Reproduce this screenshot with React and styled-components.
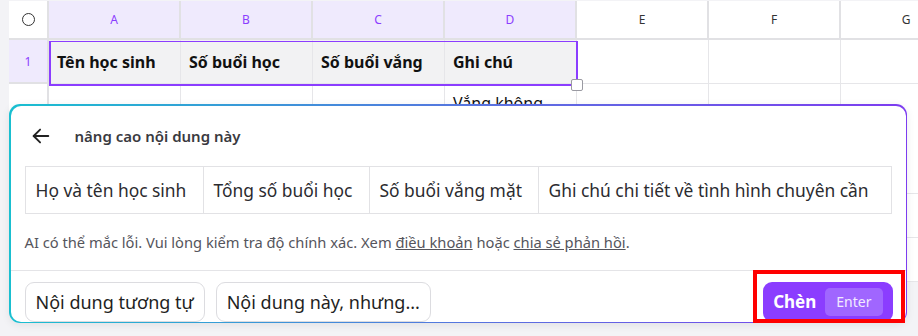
import React from 'react'
import styled, { createGlobalStyle, css } from 'styled-components'

const GlobalStyle = createGlobalStyle`
    html, body { margin: 0; padding: 0; }
    body {
        font-family: "Noto Sans", "Liberation Sans", sans-serif;
        background: #f3f3f6;
        overflow: hidden;
    }
`

const ScPage = styled.div`
    position: relative;
    width: 918px;
    height: 336px;
    overflow: hidden;
    background: #f3f3f6;
    padding: 1px 0 0 9px;
    box-sizing: border-box;
`
const ScSheet = styled.div`
    display: grid;
    grid-template-columns: 40px repeat(7, 132px);
    grid-template-rows: 39px 44px 110px 44px 44px;
    background: #fff;
`
const ScCell = styled.div`
    box-sizing: border-box;
    border-right: 1px solid #e6e6e9;
    border-bottom: 1px solid #e6e6e9;
    display: flex;
    align-items: center;
    padding: 0 8px;
    font-size: 16px;
    color: #111;
    background: #fff;
    white-space: nowrap;
    overflow: hidden;
    ${props => props.head && css`
        justify-content: center;
        font-size: 12px;
        color: #333;
        border-right: 2px solid #e1e1e4;
        border-bottom: 2px solid #e1e1e4;
        background: #fff;
    `}
    ${props => props.headActive && css`
        background: #efeafd;
        color: #8b3dff;
    `}
    ${props => props.selected && css`
        background: #f2f2f3;
        font-weight: 700;
        padding-left: 8px;
    `}
    ${props => props.top && css`
        align-items: flex-start;
        padding-top: 8px;
    `}
`
const ScCorner = styled.span`
    width: 11px;
    height: 11px;
    border: 1.5px solid #333;
    border-radius: 50%;
`
const ScSelection = styled.div`
    position: absolute;
    left: 49px;
    top: 41px;
    width: 529px;
    height: 45px;
    box-sizing: border-box;
    border: 2px solid #8b3dff;
    border-top-width: 1px;
    pointer-events: none;
`
const ScHandle = styled.span`
    position: absolute;
    right: -7px;
    bottom: -7px;
    width: 10px;
    height: 10px;
    background: #fff;
    border: 1px solid #9a9aa2;
    border-radius: 2px;
`

const ScPanelFrame = styled.div`
    position: absolute;
    left: 9px;
    top: 104px;
    width: 898px;
    height: 219px;
    box-sizing: border-box;
    padding: 1.5px;
    border-radius: 11px;
    background: linear-gradient(90deg, #19bfd0 0%, #5b6fe0 55%, #7d3cf0 100%);
    box-shadow: 0 2px 8px rgba(0, 0, 0, 0.08);
`
const ScPanel = styled.div`
    height: 100%;
    background: #fff;
    border-radius: 10px;
    display: flex;
    flex-direction: column;
`
const ScPanelHead = styled.div`
    display: flex;
    align-items: center;
    height: 60px;
    padding: 0 0 0 18px;
    gap: 22px;
`
const ScBack = styled.button`
    border: 0;
    background: none;
    padding: 0;
    width: 24px;
    height: 24px;
    display: flex;
    align-items: center;
    justify-content: center;
    color: #222;
`
const ScTitle = styled.span`
    font-size: 15px;
    font-weight: 600;
    color: #3a3a3f;
`
const ScPreview = styled.div`
    display: flex;
    margin: 0 14px 0 14px;
    border: 1px solid #e2e2e5;
    height: 48px;
    box-sizing: border-box;
`
const ScPreviewCell = styled.div`
    display: flex;
    align-items: center;
    padding: 0 10px;
    font-size: 17.4px;
    color: #2b2b2f;
    border-right: 1px solid #e2e2e5;
    white-space: nowrap;
    width: ${props => props.w}px;
    box-sizing: border-box;
    &:last-child { border-right: 0; flex: 1; }
`
const ScNote = styled.p`
    margin: 0;
    padding: 0 14px;
    height: 56px;
    box-sizing: border-box;
    display: flex;
    align-items: center;
    white-space: pre;
    font-size: 14.7px;
    color: #55555c;
    a { color: #55555c; text-decoration: underline; }
`
const ScDivider = styled.div`
    height: 1px;
    background: #e4e4e7;
`
const ScFooter = styled.div`
    display: flex;
    align-items: center;
    justify-content: space-between;
    padding: 11px 13px 0 14px;
`
const ScChips = styled.div`
    display: flex;
    gap: 11px;
`
const ScChip = styled.button`
    height: 40px;
    padding: 0 10px;
    border: 1px solid #dcdce0;
    border-radius: 9px;
    background: #fff;
    font-family: inherit;
    font-size: 18px;
    color: #1f1f23;
`
const ScInsert = styled.button`
    display: flex;
    align-items: center;
    gap: 9px;
    height: 40px;
    padding: 0 10px 0 10px;
    border: 0;
    border-radius: 9px;
    background: #8b3dff;
    color: #fff;
    font-family: inherit;
    font-size: 17px;
    font-weight: 700;
`
const ScKey = styled.span`
    display: flex;
    align-items: center;
    height: 28px;
    padding: 0 11px;
    border-radius: 5px;
    background: #a066ff;
    font-size: 14px;
    font-weight: 400;
    color: #f2eaff;
`
const ScHighlight = styled.div`
    position: absolute;
    left: 753px;
    top: 270px;
    width: 152px;
    height: 53px;
    box-sizing: border-box;
    border: 4px solid #ff0000;
    pointer-events: none;
`

const columns = ['A', 'B', 'C', 'D', 'E', 'F', 'G']
const headers = ['Tên học sinh', 'Số buổi học', 'Số buổi vắng', 'Ghi chú']
const preview = [
    { text: 'Họ và tên học sinh', w: 178 },
    { text: 'Tổng số buổi học', w: 166 },
    { text: 'Số buổi vắng mặt', w: 169 },
    { text: 'Ghi chú chi tiết về tình hình chuyên cần' },
]

const ArrowLeft = () => (
    <svg width="22" height="22" viewBox="0 0 24 24" fill="none" stroke="currentColor" strokeWidth="2" strokeLinecap="round" strokeLinejoin="round">
        <path d="M20 12H4" />
        <path d="M11 5l-7 7 7 7" />
    </svg>
)

const App = () => {
    return (
        <>
            <GlobalStyle />
            <ScPage>
                <ScSheet>
                    <ScCell head><ScCorner /></ScCell>
                    {columns.map((c, i) => (
                        <ScCell head headActive={i < 4} key={c}>{c}</ScCell>
                    ))}
                    <ScCell head headActive>1</ScCell>
                    {columns.map((c, i) => (
                        <ScCell selected={i < 4} key={'r1' + c}>{headers[i] || ''}</ScCell>
                    ))}
                    {[2, 3, 4].map(r => (
                        <React.Fragment key={r}>
                            <ScCell head>{r}</ScCell>
                            {columns.map((c, i) => (
                                <ScCell top key={r + c}>{r === 2 && i === 3 ? 'Vắng không' : ''}</ScCell>
                            ))}
                        </React.Fragment>
                    ))}
                </ScSheet>
                <ScSelection><ScHandle /></ScSelection>

                <ScPanelFrame>
                    <ScPanel>
                        <ScPanelHead>
                            <ScBack><ArrowLeft /></ScBack>
                            <ScTitle>nâng cao nội dung này</ScTitle>
                        </ScPanelHead>
                        <ScPreview>
                            {preview.map(p => (
                                <ScPreviewCell key={p.text} w={p.w}>{p.text}</ScPreviewCell>
                            ))}
                        </ScPreview>
                        <ScNote>
                            AI có thể mắc lỗi. Vui lòng kiểm tra độ chính xác. Xem <a>điều khoản</a> hoặc <a>chia sẻ phản hồi</a>.
                        </ScNote>
                        <ScDivider />
                        <ScFooter>
                            <ScChips>
                                <ScChip>Nội dung tương tự</ScChip>
                                <ScChip>Nội dung này, nhưng...</ScChip>
                            </ScChips>
                            <ScInsert>Chèn <ScKey>Enter</ScKey></ScInsert>
                        </ScFooter>
                    </ScPanel>
                </ScPanelFrame>
                <ScHighlight />
            </ScPage>
        </>
    )
}

export default App
